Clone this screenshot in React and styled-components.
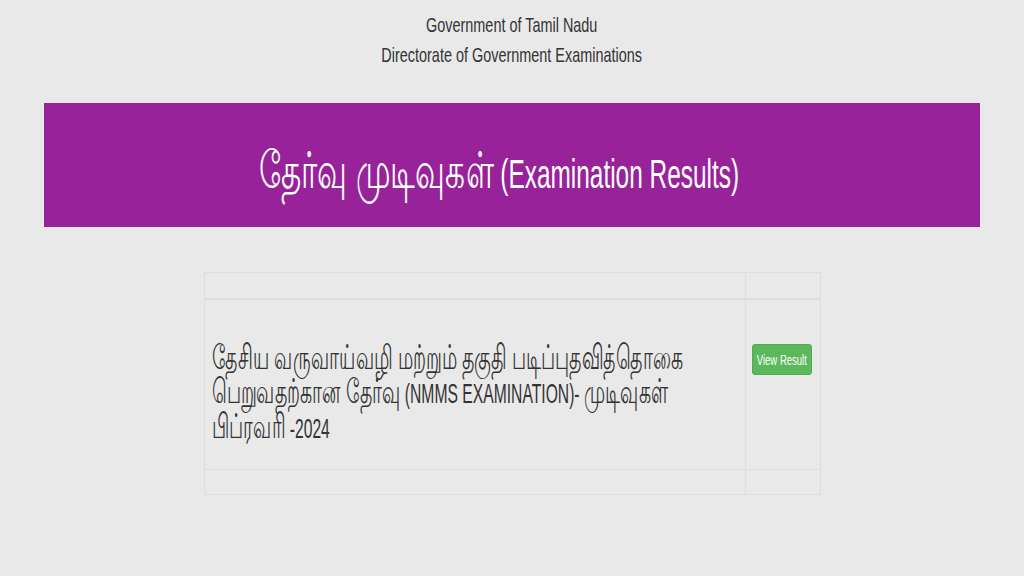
import React from "react";
import styled, { createGlobalStyle } from "styled-components";

const Global = createGlobalStyle`
  html, body { margin: 0; padding: 0; background: #e9e9e9; }
  body { font-family: "Liberation Sans", Arial, sans-serif; color: #333; }
`;

const Page = styled.div`
  width: 1024px;
  height: 576px;
  background: #e9e9e9;
  display: flex;
  flex-direction: column;
  align-items: center;
  overflow: hidden;
`;

const Narrow = styled.span`
  display: inline-block;
  transform: scaleX(${(p) => p.$sx || 0.68});
  transform-origin: ${(p) => p.$origin || "center"};
  white-space: nowrap;
`;

const Ta = styled.span`
  font-size: ${(p) => p.$k || 1.2}em;
`;

const Top = styled.div`
  padding-top: 10px;
  text-align: center;
  font-size: 21px;
  line-height: 30px;
  color: #333;
`;

const Banner = styled.div`
  margin-top: 33px;
  width: 936px;
  height: 124px;
  box-sizing: border-box;
  padding: 14px 26px 0 0;
  background: #98229a;
  display: flex;
  align-items: center;
  justify-content: center;
  color: #fff;
  font-size: 40px;
  line-height: 50px;
`;

const Table = styled.div`
  margin-top: 45px;
  width: 615px;
  border: 1px solid #dddddd;
  display: grid;
  grid-template-columns: 541px 1fr;
`;

const Cell = styled.div`
  border-right: ${(p) => (p.$last ? "none" : "1px solid #dddddd")};
  border-bottom: ${(p) => p.$bb || "none"};
  height: ${(p) => p.$h}px;
  box-sizing: border-box;
  padding: ${(p) => p.$pad || "0"};
  display: flex;
  align-items: ${(p) => p.$align || "center"};
`;

const Body = styled.div`
  font-size: 28px;
  line-height: 34.5px;
  color: #333;
  padding-left: 7px;
  padding-top: 14px;
`;

const Line = styled.div`
  white-space: nowrap;
  height: 34.5px;
`;

const Button = styled.button`
  margin-left: 6px;
  background: #5cb85c;
  border: 1px solid #4cae4c;
  border-radius: 3px;
  color: #fff;
  font-family: "Liberation Sans", Arial, sans-serif;
  font-size: 14px;
  width: 60px;
  height: 31px;
  padding: 0;
  display: flex;
  align-items: center;
  justify-content: center;
  cursor: pointer;
`;

export default function App() {
  return (
    <Page>
      <Global />
      <Top>
        <div><Narrow $sx={0.687}>Government of Tamil Nadu</Narrow></div>
        <div><Narrow $sx={0.687}>Directorate of Government Examinations</Narrow></div>
      </Top>
      <Banner>
        <Narrow $sx={0.61}><Ta $k={1.28}>தேர்வு முடிவுகள்</Ta> (Examination Results)</Narrow>
      </Banner>
      <Table>
        <Cell $h={27} $bb="2px solid #dddddd" />
        <Cell $h={27} $bb="2px solid #dddddd" $last />
        <Cell $h={170} $bb="1px solid #dddddd">
          <Body>
            <Line><Narrow $sx={0.56} $origin="left"><Ta $k={1.22}>தேசிய வருவாய்வழி மற்றும் தகுதி படிப்புதவித்தொகை</Ta></Narrow></Line>
            <Line><Narrow $sx={0.56} $origin="left"><Ta $k={1.22}>பெறுவதற்கான தேர்வு</Ta> (NMMS EXAMINATION)- <Ta $k={1.22}>முடிவுகள்</Ta></Narrow></Line>
            <Line><Narrow $sx={0.56} $origin="left"><Ta $k={1.22}>பிப்ரவரி</Ta> -2024</Narrow></Line>
          </Body>
        </Cell>
        <Cell $h={170} $bb="1px solid #dddddd" $last $align="flex-start" $pad="44px 0 0 0">
          <Button><Narrow $sx={0.68}>View Result</Narrow></Button>
        </Cell>
        <Cell $h={24} />
        <Cell $h={24} $last />
      </Table>
    </Page>
  );
}
